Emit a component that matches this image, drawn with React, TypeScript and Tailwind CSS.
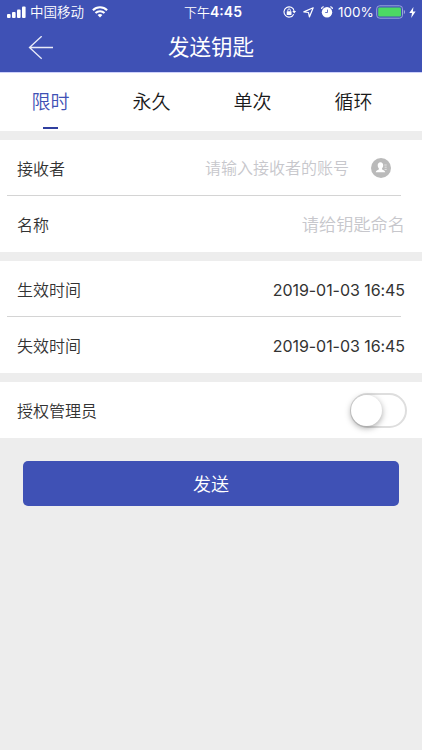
import React from 'react';

const tabs = ['限时', '永久', '单次', '循环'];

function SignalIcon() {
  return (
    <svg className="ml-[7px] h-[12px] w-[19px] shrink-0" viewBox="0 0 19 12" fill="#fff">
      <rect x="0" y="8" width="3.6" height="4" rx="1" />
      <rect x="5" y="6" width="3.6" height="6" rx="1" />
      <rect x="10" y="3.5" width="3.6" height="8.5" rx="1" />
      <rect x="15" y="0.5" width="3.6" height="11.5" rx="1" />
    </svg>
  );
}

function WifiIcon() {
  return (
    <svg className="ml-[8px] h-[12px] w-[16px] shrink-0" viewBox="0 0 16 12" fill="none" stroke="#fff" strokeWidth="2.1">
      <path d="M0.9 4.2C4.9 0.3 11.1 0.3 15.1 4.2" />
      <path d="M3.5 7C6 4.6 10 4.6 12.5 7" />
      <path d="M5.6 8.9C7 7.6 9 7.6 10.4 8.9L8 11.4Z" fill="#fff" stroke="none" />
    </svg>
  );
}

function RotationLockIcon() {
  return (
    <svg className="h-[12px] w-[14px]" viewBox="0 0 14 12" fill="none" stroke="#fff" strokeWidth="1.1">
      <path d="M10.7 8.2A5.1 5.1 0 1 1 11.1 5" />
      <path d="M9.3 5H13.1L11.2 7.6Z" fill="#fff" stroke="none" />
      <rect x="3.7" y="5.3" width="4.8" height="3.6" rx="0.4" fill="#fff" stroke="none" />
      <path d="M4.8 5.4V4.2a1.3 1.3 0 0 1 2.6 0V5.4" strokeWidth="0.9" />
    </svg>
  );
}

function LocationIcon() {
  return (
    <svg className="h-[11px] w-[11px]" viewBox="0 0 11 11" fill="none" stroke="#fff" strokeWidth="1.2" strokeLinejoin="round">
      <path d="M10.2 0.8L6.4 9.9L5.5 5.5L0.8 4.9Z" />
    </svg>
  );
}

function AlarmIcon() {
  return (
    <svg className="h-[12px] w-[12px]" viewBox="0 0 12 12" fill="none" stroke="#fff">
      <circle cx="6" cy="6.3" r="5.2" fill="#fff" stroke="none" />
      <path d="M0.6 3A2.2 2.2 0 0 1 2.8 0.8M11.4 3A2.2 2.2 0 0 0 9.2 0.8" strokeWidth="1.1" />
      <path d="M6.5 3.6V6.5H4.2" stroke="#3f51b5" strokeWidth="0.8" />
    </svg>
  );
}

function BatteryIcon() {
  return (
    <svg className="h-[14px] w-[30px]" viewBox="0 0 30 14" fill="none">
      <rect x="0.7" y="0.8" width="25.8" height="12.4" rx="3" stroke="#9ba5dc" strokeWidth="1" />
      <rect x="2.2" y="2.4" width="22.8" height="9.2" rx="1.3" fill="#4cd964" />
      <path d="M27.8 5C29.5 5.4 29.5 8.6 27.8 9Z" fill="#9ba5dc" />
    </svg>
  );
}

function StatusBar() {
  return (
    <div className="grid h-6 grid-cols-[184px_99px_1fr] items-center text-white">
      <div className="flex h-6 items-center">
        <SignalIcon />
        <span className="-mt-[2px] ml-[4px] text-[13.5px] leading-[22px]">中国移动</span>
        <WifiIcon />
      </div>
      <div className="flex items-center whitespace-nowrap text-[13px] leading-6">
        <span className="-mt-px">下午</span>
        <span className="font-['Inter','Liberation_Sans',sans-serif] text-[14px] font-semibold">4:45</span>
      </div>
      <div className="flex h-6 items-center">
        <RotationLockIcon />
        <span className="ml-[6px] flex"><LocationIcon /></span>
        <span className="ml-[7px] flex"><AlarmIcon /></span>
        <span className="ml-[5px] w-[38px] whitespace-nowrap font-['Inter','Liberation_Sans',sans-serif] text-[13.5px] font-normal leading-6">100%</span>
        <BatteryIcon />
        <svg className="ml-[3px] h-[11px] w-[7px]" viewBox="0 0 7 11" fill="#fff">
          <path d="M4.4 0L0.3 6.1H3L2.2 11L6.6 4.4H3.9Z" />
        </svg>
      </div>
    </div>
  );
}

function ContactIcon() {
  return (
    <svg className="h-5 w-5" viewBox="0 0 20 20">
      <circle cx="10" cy="10" r="10" fill="#bababa" />
      <path d="M9.4 4.3C11.2 4.3 12.3 5.6 12.2 7.5C12.1 9 11.5 9.8 11 10.4V11.3C11.3 12.1 13.9 12.2 14.3 14.2H4.7C5 12.2 7.6 12.1 7.9 11.3V10.4C7.3 9.8 6.8 9 6.7 7.5C6.6 5.6 7.7 4.3 9.4 4.3Z" fill="#fff" />
      <path d="M13.3 7H15.7M13.6 9.2H15.7M13.6 11.4H15.7" stroke="#fff" strokeWidth="0.6" />
    </svg>
  );
}

function Row({ label, children }: { label: string; children: React.ReactNode }) {
  return (
    <div className="flex h-14 items-center justify-between pl-[17px] pr-[17px] text-base text-[#333]">
      <span className="-mt-px">{label}</span>
      {children}
    </div>
  );
}

function Divider() {
  return <div className="-mt-px ml-[7px] mr-[21px] h-px bg-[#d4d4d4]" />;
}

export default function App() {
  return (
    <div className="h-[750px] w-[422px] overflow-hidden bg-[#ededed] font-['Noto_Sans_CJK_SC_DemiLight','Noto_Sans_CJK_SC',sans-serif] font-light">
      <header className="h-[72px] bg-[#3f51b5]">
        <StatusBar />
        <div className="grid h-12 grid-cols-[1fr_auto_1fr] items-center">
          <svg className="ml-[28px] h-6 w-[26px]" viewBox="0 0 26 24" fill="none" stroke="#e9ebf8" strokeWidth="1.3">
            <path d="M25 11.5H1.5M13.7 0.2L1.5 11.5L13.7 22.8" />
          </svg>
          <h1 className="-mt-[5px] font-['Noto_Sans_CJK_SC',sans-serif] text-[21.5px] font-normal leading-[44px] text-white">发送钥匙</h1>
        </div>
      </header>

      <nav className="flex h-[59px] border-t border-[#ced1fb] bg-white">
        {tabs.map((tab, i) => (
          <div key={tab} className={`flex w-[101px] flex-col items-center ${i === 0 ? 'text-[#3f51b5]' : 'text-[#1a1a1a]'}`}>
            <span className="h-[54px] text-[19px] leading-[56px]">{tab}</span>
            {i === 0 && <span className="h-[2px] w-[15px] bg-[#303f9f]" />}
          </div>
        ))}
      </nav>

      <section className="mt-[9px] h-[112px] bg-white">
        <Row label="接收者">
          <div className="flex items-center gap-[22px] pr-[14px] text-[#c7c7cc]">
            <span className="-mt-[2px]">请输入接收者的账号</span>
            <ContactIcon />
          </div>
        </Row>
        <Divider />
        <Row label="名称">
          <span className="text-[17.2px] text-[#c7c7cc]">请给钥匙命名</span>
        </Row>
      </section>

      <section className="mt-[9px] h-[112px] bg-white">
        <Row label="生效时间">
          <span className="mt-px font-['Inter','Liberation_Sans',sans-serif] font-normal tracking-[-0.06px]">2019-01-03 16:45</span>
        </Row>
        <Divider />
        <Row label="失效时间">
          <span className="mt-[2px] font-['Inter','Liberation_Sans',sans-serif] font-normal tracking-[-0.06px]">2019-01-03 16:45</span>
        </Row>
      </section>

      <section className="mt-[9px] bg-white">
        <Row label="授权管理员">
          <div className="-mr-[2px] flex h-[35px] w-[57px] items-center rounded-full border-2 border-[#dedede] bg-white">
            <span className="-ml-px h-[31px] w-[31px] rounded-full bg-white shadow-[0_2px_6px_rgba(0,0,0,0.35)]" />
          </div>
        </Row>
      </section>

      <button className="ml-[23px] mt-[23px] block h-[45px] w-[376px] rounded-[5px] bg-[#3f51b5] text-[18px] leading-[45px] text-white">
        发送
      </button>
    </div>
  );
}
